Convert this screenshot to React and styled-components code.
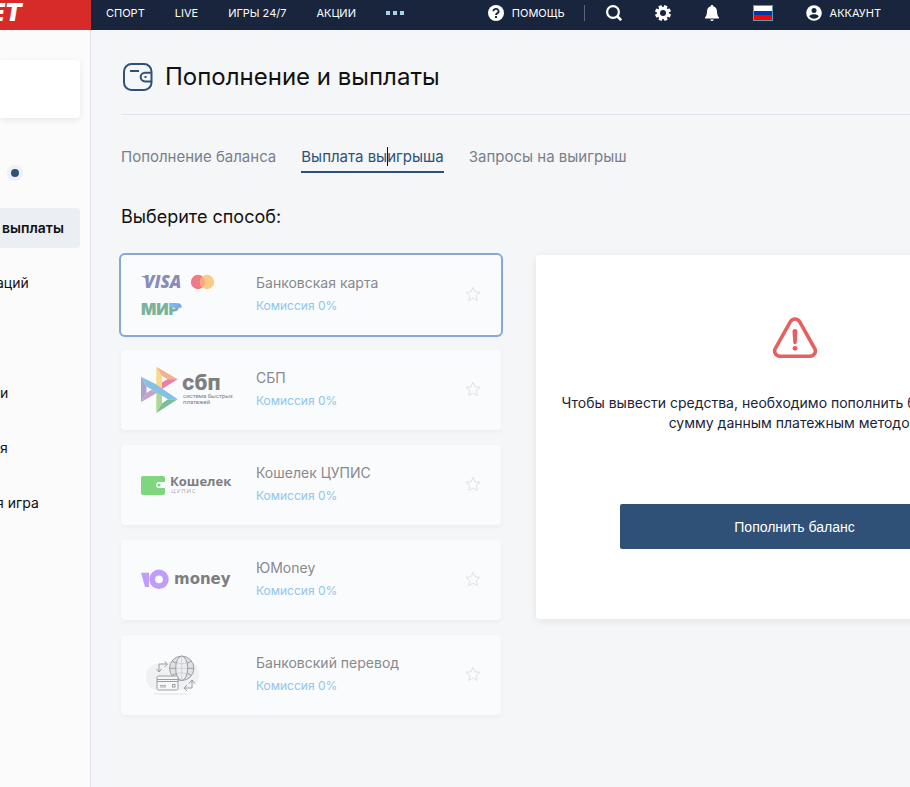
import React, { useState } from 'react';
import styled, { createGlobalStyle } from 'styled-components';

const methods = [
  { id: 'card', name: 'Банковская карта', logo: CardsLogo },
  { id: 'sbp', name: 'СБП', logo: SbpLogo },
  { id: 'cupis', name: 'Кошелек ЦУПИС', logo: CupisLogo },
  { id: 'yoomoney', name: 'ЮMoney', logo: YooMoneyLogo },
  { id: 'transfer', name: 'Банковский перевод', logo: TransferLogo },
];

const tabs = ['Пополнение баланса', 'Выплата выигрыша', 'Запросы на выигрыш'];

const App = () => {
  const [tab, setTab] = useState(1);
  const [selected, setSelected] = useState('card');

  return (
    <Page>
      <GlobalStyle />
      <Header>
        <Brand href="#">BET</Brand>
        <Menu>
          <MenuLink href="#">СПОРТ</MenuLink>
          <MenuLink href="#">LIVE</MenuLink>
          <MenuLink href="#">ИГРЫ 24/7</MenuLink>
          <MenuLink href="#">АКЦИИ</MenuLink>
          <Dots aria-label="Ещё"><i /><i /><i /></Dots>
        </Menu>
        <Tools>
          <Help href="#"><HelpIcon />ПОМОЩЬ</Help>
          <Icons>
            <IconButton aria-label="Поиск"><SearchIcon /></IconButton>
            <IconButton aria-label="Настройки"><GearIcon /></IconButton>
            <IconButton aria-label="Уведомления"><BellIcon /></IconButton>
            <Flag aria-label="Язык"><i /><i /><i /></Flag>
          </Icons>
          <Account href="#"><UserIcon />АККАУНТ</Account>
        </Tools>
      </Header>
      <Body>
        <Sidebar>
          <Balance />
          <Indicator><Dot /></Indicator>
          <SideNav>
            <SideLink href="#" $active>выплаты</SideLink>
            <SideLink href="#" $clipped>аций</SideLink>
          </SideNav>
          <SideNav $spaced>
            <SideLink href="#">и</SideLink>
            <SideLink href="#">я</SideLink>
            <SideLink href="#" $clipped>я игра</SideLink>
          </SideNav>
        </Sidebar>
        <Main>
          <TitleRow>
            <WalletIcon />
            <Title>Пополнение и выплаты</Title>
          </TitleRow>
          <Tabs>
            {tabs.map((label, i) => (
              <Tab key={label} $active={i === tab} onClick={() => setTab(i)}>
                {label}
                {i === tab && <Caret />}
              </Tab>
            ))}
          </Tabs>
          <Subtitle>Выберите способ:</Subtitle>
          <Content>
            <Methods>
              {methods.map(({ id, name, logo: Logo }) => (
                <Method key={id} $active={id === selected}>
                  <MethodButton onClick={() => setSelected(id)}>
                    <Logo />
                    <MethodText>
                      <MethodName>{name}</MethodName>
                      <Commission>Комиссия 0%</Commission>
                    </MethodText>
                  </MethodButton>
                  <StarButton aria-label="В избранное"><StarIcon /></StarButton>
                </Method>
              ))}
            </Methods>
            <Panel>
              <WarningIcon />
              <Message>
                Чтобы вывести средства, необходимо пополнить баланс на любую
                <br />
                сумму данным платежным методом
              </Message>
              <Submit>Пополнить баланс</Submit>
            </Panel>
          </Content>
        </Main>
      </Body>
    </Page>
  )
}

/* Icons */

function HelpIcon() {
  return (
    <svg width="16" height="16" viewBox="0 0 16 16" aria-hidden="true">
      <circle cx="8" cy="8" r="8" fill="#fff" />
      <path d="M5.4 6.3a2.6 2.4 0 1 1 3.8 2.1C8.3 8.9 8 9.2 8 10" fill="none" stroke="#18253d" strokeWidth="1.8" />
      <rect x="7" y="11" width="2" height="2" fill="#18253d" />
    </svg>
  )
}

function SearchIcon() {
  return (
    <svg width="16" height="16" viewBox="0 0 16 16" fill="none" stroke="#fff" aria-hidden="true">
      <circle cx="7" cy="7" r="5.9" strokeWidth="2.2" />
      <path d="M11 11l4.2 4.2" strokeWidth="2.6" />
    </svg>
  )
}

function GearIcon() {
  return (
    <svg width="16" height="16" viewBox="0 0 16 16" aria-hidden="true">
      <g fill="#fff">
        {[22, 67, 112, 157].map(angle => (
          <rect key={angle} x="6.2" y="0" width="3.6" height="16" rx="0.8" transform={`rotate(${angle} 8 8)`} />
        ))}
        <circle cx="8" cy="8" r="6" />
      </g>
      <circle cx="8" cy="8" r="3" fill="#18253d" />
    </svg>
  )
}

function BellIcon() {
  return (
    <svg width="16" height="16" viewBox="0 0 16 16" fill="#fff" aria-hidden="true">
      <path d="M8 0c-.8 0-1.3.5-1.3 1.2C4.3 1.8 3.2 3.8 3 6.3c-.2 2.9-.5 4.7-2 6.2v1h14v-1c-1.5-1.5-1.8-3.3-2-6.2-.2-2.5-1.3-4.5-3.7-5.1C9.3.5 8.8 0 8 0z" />
      <path d="M6.3 14.5h3.4a1.7 1.5 0 0 1-3.4 0z" />
    </svg>
  )
}

function UserIcon() {
  return (
    <svg width="16" height="16" viewBox="0 0 16 16" aria-hidden="true">
      <circle cx="8" cy="8" r="7.8" fill="#fff" />
      <circle cx="8" cy="5.4" r="2.5" fill="#18253d" />
      <path d="M3.2 11.3C4.2 9.6 6.2 9.2 8 9.2s3.8.4 4.8 2.1c-1 1.5-2.8 2.5-4.8 2.5s-3.8-1-4.8-2.5z" fill="#18253d" />
    </svg>
  )
}

function WalletIcon() {
  return (
    <svg width="30" height="30" viewBox="0 0 30 30" fill="none" stroke="#305177" aria-hidden="true">
      <rect x="1" y="2" width="27.5" height="26" rx="7.5" strokeWidth="2" />
      <path d="M7 9h9" strokeWidth="2" />
      <path d="M28 10.8h-6a4.3 4.3 0 0 0 0 8.6h6" strokeWidth="2" />
      <rect x="21.5" y="14" width="2" height="2" fill="#305177" stroke="none" />
    </svg>
  )
}

function StarIcon() {
  return (
    <svg width="16" height="16" viewBox="0 0 16 16" fill="none" stroke="#e0e2e6" strokeLinejoin="round" aria-hidden="true">
      <path d="M8 1.2l2 4.6 5 .5-3.8 3.3 1.1 4.9L8 12l-4.3 2.5 1.1-4.9L1 6.3l5-.5z" />
    </svg>
  )
}

function WarningIcon() {
  return (
    <svg width="46" height="42" viewBox="0 0 46 42" fill="none" stroke="#e66060" aria-hidden="true">
      <path d="M18.4 4.6a5.3 5.3 0 0 1 9.2 0L42.7 31.5a5.2 5.2 0 0 1-4.6 7.7H7.9a5.2 5.2 0 0 1-4.6-7.7z" strokeWidth="3.6" />
      <path d="M20.5 14.5a2.5 2.5 0 0 1 5 0l-.7 11a1.8 1.8 0 0 1-3.6 0z" fill="#e66060" stroke="none" />
      <circle cx="23" cy="31.3" r="2.4" fill="#e66060" stroke="none" />
    </svg>
  )
}

/* Payment logos */

function CardsLogo() {
  return (
    <Logo viewBox="0 0 90 50">
      <defs>
        <linearGradient id="mir" x1="0" x2="1">
          <stop offset="0" stopColor="#78c3ee" />
          <stop offset="1" stopColor="#839ef0" />
        </linearGradient>
      </defs>
      <text x="3" y="18" fill="#8a8bb8" fontFamily="Open Sans" fontSize="17" fontWeight="800" fontStyle="italic">VISA</text>
      <path d="M0 6h5l3 4z" fill="#8a8bb8" />
      <circle cx="57" cy="12" r="7.2" fill="#f07a87" />
      <circle cx="66" cy="12" r="7.2" fill="#f7cb88" />
      <path d="M61.5 6.4a7.2 7.2 0 0 1 0 11.2a7.2 7.2 0 0 1 0-11.2z" fill="#f9a77c" />
      <text x="0" y="45" fill="#7bb29c" fontFamily="Inter" fontSize="16" fontWeight="900">МИР</text>
      <path d="M28 33.3h9c2.5 0 4 2 3.5 4.5h-8c-2.5 0-4-2-4.5-4.5z" fill="url(#mir)" />
    </Logo>
  )
}

function SbpLogo() {
  return (
    <Logo viewBox="0 0 90 50">
      <path d="M0 11.7l5.5 9.8V28L0 37.3z" fill="#aaa3cf" />
      <path d="M0 37.3L5.5 28l5-3.2 6 2.7z" fill="#c9a1cb" />
      <path d="M15.3 1.7L21 11v13l-5.7-2z" fill="#f9d98a" />
      <path d="M15.3 1.7l21.4 12.6H26.5L21 11z" fill="#f3b18e" />
      <path d="M36.7 14.3H26.5L21 17.5V24z" fill="#ec7fa8" />
      <path d="M15.3 26L21 29v9.5L15.3 48z" fill="#add794" />
      <path d="M15.3 48L21 38.5l6-4.2h9.7z" fill="#7cbc98" />
      <path d="M0 11.7l14.5 7.3 22.2 15.3H27L5.5 21.5z" fill="#84c1e4" />
      <text x="41" y="25" fill="#7d7e81" fontFamily="Inter" fontSize="21" fontWeight="800">сбп</text>
      <text x="42" y="33" fill="#7d7e81" fontFamily="Roboto" fontSize="6">система быстрых</text>
      <text x="42" y="39" fill="#7d7e81" fontFamily="Roboto" fontSize="6">платежей</text>
    </Logo>
  )
}

function CupisLogo() {
  return (
    <Logo viewBox="0 0 90 50">
      <path d="M2 16h20a2 2 0 0 1 2 2v4h-6a3 3 0 0 0 0 6h6v5a2 2 0 0 1-2 2H2a2 2 0 0 1-2-2V18a2 2 0 0 1 2-2z" fill="#7ed67f" />
      <circle cx="18" cy="25" r="1.6" fill="#7ed67f" />
      <text x="29" y="26" fill="#7d7e81" fontFamily="Open Sans" fontSize="13" fontWeight="700">Кошелек</text>
      <text x="30" y="33" fill="#a6a7aa" fontFamily="Open Sans" fontSize="6" letterSpacing="1">ЦУПИС</text>
    </Logo>
  )
}

function YooMoneyLogo() {
  return (
    <Logo viewBox="0 0 90 50">
      <path d="M0 17.7h8V32H4z" fill="#c19dfa" />
      <circle cx="18" cy="24.3" r="6.8" fill="none" stroke="#c19dfa" strokeWidth="5.8" />
      <text x="33" y="29" fill="#7d7e81" fontFamily="DejaVu Sans" fontSize="15" fontWeight="700">money</text>
    </Logo>
  )
}

function TransferLogo() {
  return (
    <Logo viewBox="0 0 90 50" fill="none" stroke="#9b9ea4">
      <path d="M5 26c0-9 8-13 17-13 8-1 14-5 22-4 8 2 14 7 14 15 0 9-8 16-18 16H17C9 40 5 34 5 26z" fill="#f0f1f3" stroke="none" />
      <path d="M13 44h33" stroke="#eceef0" strokeWidth="2" />
      <circle cx="40.7" cy="18.3" r="12.2" fill="#dfe1e5" />
      <path d="M40.7 6v24.5M28.5 18.3h24.5M31 11c5 3.5 15 3.5 19.5 0M31 25.5c5-3.5 15-3.5 19.5 0" />
      <ellipse cx="40.7" cy="18.3" rx="6" ry="12.2" fill="#f6f7f9" fillOpacity=".6" />
      <rect x="16" y="26" width="21" height="14" rx="1.5" fill="#f6f7f9" />
      <path d="M16 29.5h21M16 31.5h21" />
      <path d="M19 35.5h6M19 37h6" strokeWidth=".8" />
      <rect x="31.5" y="34.5" width="2.5" height="2.5" />
      <path d="M18 22v-8h8M23.5 11.5l3 2.5-3 3M15.5 19l2.5 3 2.5-3" />
      <path d="M51 30v8h-8M46 35l-3 3 3 3M48 33.5l3-3.5 3 3.5" />
    </Logo>
  )
}

const GlobalStyle = createGlobalStyle`
  * {
    box-sizing: border-box;
  }

  body {
    margin: 0;
    background-color: #f4f6f8;
    font-family: Inter, "Liberation Sans", sans-serif;
    color: #111;
  }

  button {
    padding: 0;
    border: none;
    background: none;
    font-family: inherit;
    cursor: pointer;
  }

  a {
    color: inherit;
    text-decoration: none;
  }

  svg {
    display: block;
    flex-shrink: 0;
  }
`

const Page = styled.div`
  display: flex;
  flex-direction: column;
  min-height: 100vh;
  overflow: hidden;
`

const Header = styled.header`
  display: flex;
  height: 30px;
  background-color: #18253d;
  color: #fff;
  font-size: 11px;
  font-weight: 400;
`

const Brand = styled.a`
  display: flex;
  justify-content: flex-end;
  align-items: center;
  width: 91px;
  padding: 0 69px 6px 0;
  background-color: #d62b28;
  font-size: 25px;
  font-weight: 900;
  font-style: italic;
`

const Menu = styled.nav`
  display: flex;
  align-items: center;
  gap: 30px;
  padding: 0 15px 4px;
`

const MenuLink = styled.a`
  white-space: nowrap;
`

const Dots = styled.button`
  display: flex;
  gap: 3px;

  i {
    width: 4px;
    height: 4px;
    background-color: #a9d3e4;
  }
`

const Tools = styled.div`
  display: flex;
  align-items: center;
  margin-left: auto;
  padding: 0 29px 4px 0;
`

const Help = styled.a`
  display: flex;
  align-items: center;
  gap: 8px;
  height: 16px;
  padding-right: 19px;
  border-right: 1px solid #5b6679;
`

const Icons = styled.div`
  display: flex;
  align-items: center;
  gap: 33px;
  padding: 0 33px 0 21px;
`

const IconButton = styled.button`
  width: 16px;
  height: 16px;
`

const Flag = styled.button`
  display: flex;
  flex-direction: column;
  width: 20px;
  height: 16px;
  border: 1px solid #5f9ab5;

  i {
    flex: 1;
    width: 100%;
    background-color: #fff;
  }

  i:nth-child(2) {
    background-color: #0039a6;
  }

  i:nth-child(3) {
    background-color: #f00;
  }
`

const Account = styled.a`
  display: flex;
  align-items: center;
  gap: 8px;
`

const Body = styled.div`
  display: flex;
  flex: 1;
`

const Sidebar = styled.aside`
  flex: 0 0 91px;
  padding: 30px 10px 0 0;
  background-color: #fbfbfc;
  border-right: 1px solid #dfe2ea;
`

const Balance = styled.div`
  height: 58px;
  border-radius: 0 4px 4px 0;
  background-color: #fff;
  box-shadow: 0 2px 6px rgba(0, 0, 0, 0.08);
`

const Indicator = styled.div`
  display: flex;
  align-items: center;
  height: 40px;
  margin: 35px 0 15px;
  padding-left: 7px;
`

const Dot = styled.span`
  width: 16px;
  height: 16px;
  border: 4px solid #eef0f4;
  border-radius: 50%;
  background-color: #305177;
`

const SideNav = styled.nav`
  display: flex;
  flex-direction: column;
  gap: 15px;
  margin-top: ${({ $spaced }) => ($spaced ? '70px' : '0')};
`

const SideLink = styled.a`
  height: 40px;
  padding-left: ${({ $active }) => ($active ? '2px' : '0')};
  border-radius: 0 4px 4px 0;
  background-color: ${({ $active }) => ($active ? '#ebeef3' : 'transparent')};
  font-size: 14px;
  font-weight: ${({ $active }) => ($active ? 600 : 400)};
  line-height: 39px;
  text-indent: ${({ $clipped }) => ($clipped ? '-4px' : '0')};
  white-space: nowrap;
`

const Main = styled.main`
  flex: 1;
  min-width: 0;
  padding: 30px 30px 0;
`

const TitleRow = styled.div`
  display: flex;
  align-items: center;
  gap: 12px;
  height: 55px;
  margin-right: -30px;
  padding: 0 0 20px 2px;
  border-bottom: 1px solid #dfe2ec;
`

const Title = styled.h1`
  margin: 0;
  padding-bottom: 2px;
  font-size: 24px;
  font-weight: 400;
  white-space: nowrap;
`

const Tabs = styled.div`
  display: flex;
  gap: 25px;
  margin-top: 26px;
`

const Tab = styled.button`
  position: relative;
  height: 32px;
  border-bottom: 2px solid ${({ $active }) => ($active ? '#305177' : 'transparent')};
  color: ${({ $active }) => ($active ? '#305177' : '#7a7f8b')};
  font-size: 15px;
  font-weight: 400;
  white-space: nowrap;
`

const Caret = styled.span`
  position: absolute;
  top: 6px;
  left: 86px;
  width: 1px;
  height: 19px;
  background-color: #111;
`

const Subtitle = styled.h2`
  margin: 32px 0 26px;
  font-size: 18px;
  font-weight: 400;
  line-height: 24px;
`

const Content = styled.div`
  display: flex;
  align-items: flex-start;
  gap: 35px;
`

const Methods = styled.ul`
  display: flex;
  flex: 0 0 380px;
  flex-direction: column;
  gap: 15px;
  margin: 0;
  padding: 0;
  list-style: none;
`

const Method = styled.li`
  display: flex;
  align-items: center;
  height: 80px;
  padding: 0 20px;
  border-radius: 4px;
  background-color: #fafbfd;
  box-shadow: ${({ $active }) => ($active ? '0 0 0 2px #86a8d8, ' : '')}0 2px 5px rgba(0, 0, 0, 0.04);
`

const MethodButton = styled.button`
  display: flex;
  flex: 1;
  align-items: center;
  gap: 25px;
  height: 100%;
  text-align: left;
`

const Logo = styled.svg`
  width: 90px;
  height: 50px;
  overflow: visible;
`

const MethodText = styled.span`
  display: flex;
  flex-direction: column;
  gap: 3px;
  padding-bottom: 2px;
  line-height: 20px;
`

const MethodName = styled.span`
  color: #88898b;
  font-size: 14px;
`

const Commission = styled.span`
  color: #8fc6e9;
  font-size: 12px;
`

const StarButton = styled.button`
  width: 16px;
  height: 18px;
  padding-bottom: 2px;
`

const Panel = styled.section`
  display: flex;
  flex: 1 0 517px;
  flex-direction: column;
  align-items: center;
  padding: 62px 25px 70px;
  border-radius: 4px;
  background-color: #fff;
  box-shadow: 0 2px 8px rgba(0, 0, 0, 0.08);
`

const Message = styled.p`
  margin: 34px 0 71px;
  color: #1b2338;
  font-size: 14px;
  line-height: 20px;
  text-align: center;
  white-space: nowrap;
`

const Submit = styled.button`
  width: 350px;
  height: 45px;
  border-radius: 2px;
  background-color: #305177;
  color: #fff;
  font-family: "Liberation Sans", Arial, sans-serif;
  font-size: 14px;
`

export default App
